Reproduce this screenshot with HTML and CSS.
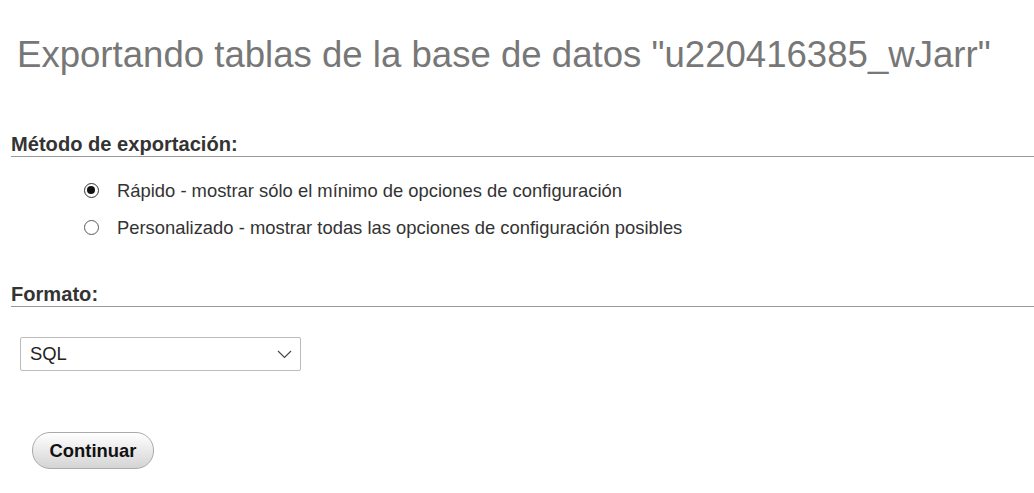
FILE: index.html
```html
<!DOCTYPE html>
<html lang="es">
<head>
<meta charset="utf-8">
<title>Exportar</title>
<link rel="stylesheet" href="styles.css">
</head>
<body>
<div class="page">
  <h2 class="title">Exportando tablas de la base de datos "u220416385_wJarr"</h2>

  <div class="section first">
    <h3 class="section-head">Método de exportación:</h3>
    <ul class="options">
      <li class="option"><span class="radio checked"></span><span>Rápido - mostrar sólo el mínimo de opciones de configuración</span></li>
      <li class="option"><span class="radio"></span><span>Personalizado - mostrar todas las opciones de configuración posibles</span></li>
    </ul>
  </div>

  <div class="section second">
    <h3 class="section-head">Formato:</h3>
    <div class="select">
      <span>SQL</span>
      <svg class="chev" width="15" height="9" viewBox="0 0 15 9"><path d="M1 1 L7.5 7.5 L14 1" fill="none" stroke="#444" stroke-width="1.1"/></svg>
    </div>
  </div>

  <div class="actions">
    <button class="btn">Continuar</button>
  </div>
</div>
</body>
</html>
```
FILE: styles.css
```css
html, body { margin: 0; padding: 0; background: #fff; }
body { font-family: "Liberation Sans", Arial, sans-serif; color: #333; }
.page { padding: 0 0 0 11px; }
.title {
  margin: 0;
  padding: 27px 0 0 6px;
  font-size: 36.6px;
  font-weight: normal;
  color: #777;
  line-height: 56px;
}
.section-head {
  margin: 0;
  font-size: 20.1px;
  font-weight: bold;
  color: #333;
  border-bottom: 1px solid #999;
  line-height: 23px;
}
.first .section-head { margin-top: 50px; }
.second .section-head { margin-top: 37px; }
.options { list-style: none; margin: 0; padding: 15px 0 0 73px; }
.option { display: flex; align-items: center; height: 37px; font-size: 18.4px; color: #333; }
.radio {
  width: 15px; height: 15px; border: 1.3px solid #5a5a5a; border-radius: 50%;
  margin-right: 18px; box-sizing: border-box; position: relative; background: #fff;
  flex: none;
}
.radio.checked { border-color: #333; }
.radio.checked::after {
  content: ""; position: absolute; left: 2.2px; top: 2.2px; width: 8px; height: 8px;
  border-radius: 50%; background: #111;
}
.select {
  margin: 30px 0 0 9px;
  width: 281px; height: 34px; box-sizing: border-box;
  border: 1px solid #bbb; border-radius: 2px;
  display: flex; align-items: center; justify-content: space-between;
  padding: 0 8px 0 9px; font-size: 18.4px; color: #222;
}
.actions { padding: 61px 0 0 21px; }
.btn {
  font-family: "Liberation Sans", Arial, sans-serif;
  font-size: 18.4px; font-weight: bold; color: #111;
  width: 122px; height: 37px; border-radius: 18px;
  border: 1px solid #aaa;
  background: linear-gradient(#fff, #d4d4d4);
  padding: 0;
}
```
